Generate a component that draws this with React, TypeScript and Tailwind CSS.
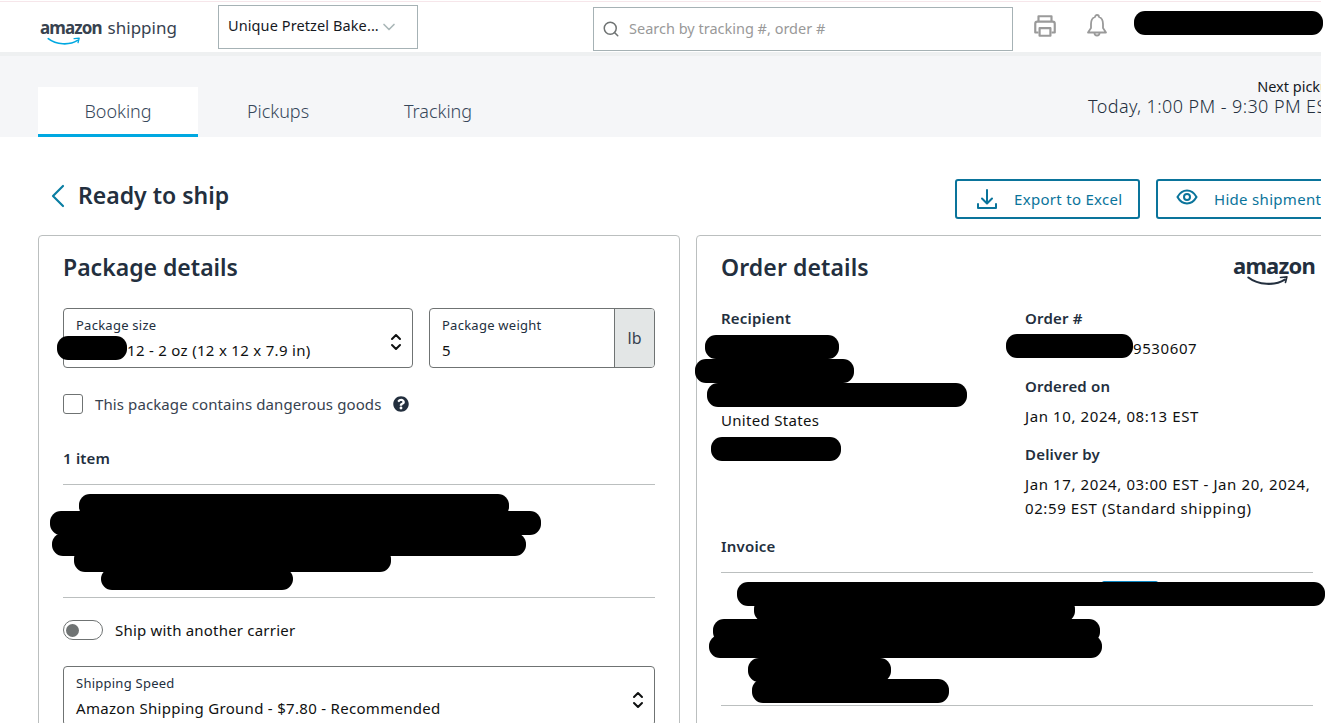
import { ChevronDown, ChevronLeft, Search } from "lucide-react";
import { FaQuestionCircle } from "react-icons/fa";

const Blot = ({ className }: { className: string }) => (
  <div className={`absolute bg-black rounded-[11px] ${className}`} />
);

const Swoosh = ({ className, color }: { className: string; color: string }) => (
  <svg viewBox="0 0 60 16" className={className} fill="none" stroke={color}>
    <path d="M2 3c14 11 38 12 52 3" strokeWidth="3" strokeLinecap="round" />
    <path d="M48 3l9-1-2 8" strokeWidth="2.4" strokeLinecap="round" strokeLinejoin="round" />
  </svg>
);

const Stepper = () => (
  <svg viewBox="0 0 12 20" className="h-[20px] w-[12px] shrink-0 self-center" fill="none" stroke="#0f1111" strokeWidth="2" strokeLinecap="round" strokeLinejoin="round">
    <path d="M2 7l4-4 4 4" />
    <path d="M2 13l4 4 4-4" />
  </svg>
);

function Label({ children }: { children: string }) {
  return <div className="h-[20px] text-[15px] font-semibold leading-[20px] tracking-[0.2px] text-[#232f3e]">{children}</div>;
}

function Value({ children }: { children: string }) {
  return <div className="text-[15px] leading-[24px] tracking-[0.6px] text-[#0f1111]">{children}</div>;
}

function Field({ label, value, className, valueClass }: { label: string; value: string; className: string; valueClass: string }) {
  return (
    <div className={`flex h-[60px] rounded-[4px] border border-[#6f7373] pl-[12px] pr-[10px] pt-[7px] ${className}`}>
      <div className="flex-1">
        <div className="text-[13px] leading-[18px] tracking-[0.25px] text-[#232f3e]">{label}</div>
        <div className={`mt-[5px] text-[15px] leading-[22px] tracking-[0.3px] text-[#0f1111] ${valueClass}`}>{value}</div>
      </div>
      <Stepper />
    </div>
  );
}

export default function App() {
  return (
    <div
      className="relative h-[723px] w-[1326px] overflow-hidden bg-white"
      style={{ fontFamily: '"Noto Sans", "Open Sans", sans-serif' }}
    >
      <div className="h-[723px] w-[1321px] overflow-hidden">
        <div className="h-[2px] border-b border-[#f6e6ea]" />

        {/* HEADER */}
        <header className="flex h-[54px] items-start border-b-4 border-[#eef0f1] bg-white pl-[40px]">
          <div className="w-[178px] shrink-0 pt-[13px]">
            <div className="relative flex items-baseline gap-[6px] leading-[26px] text-[#37424f]">
              <span className="text-[17px] font-bold tracking-[-0.9px]">amazon</span>
              <span className="text-[17px]">shipping</span>
              <Swoosh className="absolute left-[7px] top-[22px] h-[9px] w-[34px]" color="#00a8e1" />
            </div>
          </div>
          <div className="mt-[3px] flex h-[44px] w-[200px] shrink-0 items-center justify-between border border-[#a6b2b5] pl-[9px] pr-[18px]">
            <span className="whitespace-nowrap pb-[3px] text-[14.500px] tracking-[0.1px] text-[#16191f]">Unique Pretzel Bake...</span>
            <ChevronDown size={20} className="shrink-0 text-[#aab7b8]" />
          </div>
          <div className="ml-[175px] mt-[5px] flex h-[44px] w-[420px] shrink-0 items-center gap-[9px] border border-[#a6b2b5] pl-[8px]">
            <Search size={18} className="text-[#6f7373]" />
            <span className="text-[14.500px] text-[#999]">Search by tracking #, order #</span>
          </div>
          <svg viewBox="0 0 24 24" className="ml-[19px] mt-[11px] h-[26px] w-[26px] shrink-0" fill="none" stroke="#9a9a9a" strokeWidth="2" strokeLinejoin="round">
            <path d="M6 8V3h12v5" />
            <path d="M6 18H3V10a2 2 0 0 1 2-2h14a2 2 0 0 1 2 2v8h-3" />
            <path d="M7 14h10v7H7z" />
          </svg>
          <svg viewBox="0 0 24 26" className="ml-[27px] mt-[11px] h-[26px] w-[24px] shrink-0" fill="none" stroke="#9a9a9a" strokeWidth="1.8" strokeLinejoin="round">
            <path d="M12 2a2 2 0 0 1 2 2c3 1 4 3.500 4 7v4l3 4.500H3L6 15v-4c0-3.500 1-6 4-7a2 2 0 0 1 2-2z" />
            <path d="M9.500 20a2.500 2.500 0 0 0 5 0" />
          </svg>
        </header>

        {/* TABS */}
        <div className="flex h-[81px] items-start bg-[#f5f6f8] pl-[38px] pt-[31px]">
          <div className="flex h-[50px] w-[160px] shrink-0 items-center justify-center border-b-[3px] border-[#00a8e1] bg-white pt-[2px] text-[18px] font-light text-[#37475a]">
            Booking
          </div>
          <div className="flex h-[50px] w-[160px] shrink-0 items-center justify-center pb-[1px] text-[18px] font-light text-[#37475a]">
            Pickups
          </div>
          <div className="flex h-[50px] w-[160px] shrink-0 items-center justify-center pb-[1px] text-[18px] font-light text-[#37475a]">
            Tracking
          </div>
          <div className="ml-[570px] mt-[-10px] w-[248px] shrink-0 text-right">
            <div className="mr-[-2px] text-[14.500px] leading-[19px] text-[#16191f]">Next pickup</div>
            <div className="whitespace-nowrap text-[18px] font-light leading-[20px] tracking-[0.4px] text-[#232f3e]">
              Today, 1:00 PM - 9:30 PM EST
            </div>
          </div>
        </div>

        {/* TITLE ROW */}
        <div className="mt-[42px] flex h-[40px] items-center pl-[38px]">
          <ChevronLeft size={40} strokeWidth={1.3} className="mb-[6px] shrink-0 text-[#0a7ea3]" />
          <h1 className="mb-[8px] w-[152px] shrink-0 whitespace-nowrap text-[23px] font-semibold text-[#232f3e]">Ready to ship</h1>
          <button className="ml-[725px] flex h-[40px] w-[185px] shrink-0 items-center rounded-[3px] border-2 border-[#0a749b] pl-[19px] text-[15px] tracking-[0.3px] text-[#0a749b]">
            <svg viewBox="0 0 22 22" className="h-[22px] w-[22px]" fill="none" stroke="#0a749b" strokeWidth="2" strokeLinecap="round" strokeLinejoin="round">
              <path d="M11 2v13M6 10.500l5 5 5-5" />
              <path d="M2 16v4h18v-4" />
            </svg>
            <span className="ml-[16px]">Export to Excel</span>
          </button>
          <button className="ml-[16px] flex h-[40px] w-[200px] shrink-0 items-center rounded-[3px] border-2 border-[#0a749b] pl-[18px] text-[15px] tracking-[0.3px] text-[#0a749b]">
            <svg viewBox="0 0 22 22" className="mb-[4px] h-[22px] w-[22px]" fill="none" stroke="#0a749b" strokeWidth="2">
              <path d="M1.500 11C4 6.500 7.500 4.500 11 4.500s7 2 9.500 6.500c-2.500 4.500-6 6.500-9.500 6.500S4 15.500 1.500 11z" />
              <circle cx="11" cy="11" r="3" />
            </svg>
            <span className="ml-[16px] whitespace-nowrap">Hide shipment</span>
          </button>
        </div>

        {/* CARDS */}
        <div className="mt-[16px] flex gap-[16px] pl-[38px]">
          <section className="h-[600px] w-[642px] shrink-0 rounded-[4px] border border-[#bbbfbf] px-[24px] pt-[14px]">
            <h2 className="h-[34px] text-[23px] font-semibold leading-[34px] text-[#232f3e]">Package details</h2>
            <div className="mt-[24px] flex gap-[16px]">
              <Field label="Package size" value="12 - 2 oz (12 x 12 x 7.9 in)" className="w-[350px]" valueClass="pl-[51px]" />
              <div className="flex h-[60px] w-[226px] overflow-hidden rounded-[4px] border border-[#6f7373]">
                <div className="flex-1 pl-[12px] pt-[7px]">
                  <div className="text-[13px] leading-[18px] tracking-[0.25px] text-[#232f3e]">Package weight</div>
                  <div className="mt-[5px] text-[15px] leading-[22px] text-[#0f1111]">5</div>
                </div>
                <div className="flex w-[40px] items-center justify-center border-l border-[#6f7373] bg-[#e3e6e6] text-[16px] text-[#37424f]">
                  lb
                </div>
              </div>
            </div>
            <div className="mt-[26px] flex h-[20px] items-center">
              <div className="h-[20px] w-[20px] shrink-0 rounded-[3px] border border-[#6f7373]" />
              <span className="ml-[12px] text-[15px] tracking-[0.1px] text-[#37424f]">This package contains dangerous goods</span>
              <FaQuestionCircle size={16} className="ml-[12px] text-[#232f3e]" />
            </div>
            <div className="mt-[34px]">
              <Label>1 item</Label>
            </div>
            <div className="mt-[16px] h-[114px] border-y border-[#bbbfbf]" />
            <div className="mt-[22px] flex h-[20px] items-center">
              <div className="flex h-[20px] w-[40px] shrink-0 items-center rounded-full border border-[#6f7373] pl-[2px]">
                <div className="h-[13px] w-[13px] rounded-full bg-[#6f7373]" />
              </div>
              <span className="ml-[12px] text-[15px] tracking-[0.2px] text-[#0f1111]">Ship with another carrier</span>
            </div>
            <div className="mt-[26px]">
              <Field label="Shipping Speed" value="Amazon Shipping Ground - $7.80 - Recommended" className="w-[592px]" valueClass="" />
            </div>
          </section>

          <section className="h-[600px] w-[640px] shrink-0 rounded-[4px] border border-[#bbbfbf] pl-[24px] pr-[22px] pt-[14px]">
            <div className="flex h-[34px] justify-between">
              <h2 className="text-[23px] font-semibold leading-[34px] tracking-[0.1px] text-[#232f3e]">Order details</h2>
              <div className="relative mt-[1px] w-[80px] whitespace-nowrap text-center text-[22px] font-bold leading-[28px] tracking-[-0.8px] text-[#232f3e]">
                amazon
                <Swoosh className="absolute left-[14px] top-[24px] h-[12px] w-[42px]" color="#232f3e" />
              </div>
            </div>
            <div className="mt-[24px] flex">
              <div className="w-[304px] shrink-0">
                <Label>Recipient</Label>
                <div className="mt-[80px] text-[15px] leading-[24px] tracking-[0.3px] text-[#0f1111]">United States</div>
              </div>
              <div className="w-[290px] shrink-0">
                <Label>Order #</Label>
                <div className="mt-[8px] pl-[108px]">
                  <Value>9530607</Value>
                </div>
                <div className="mt-[16px]">
                  <Label>Ordered on</Label>
                </div>
                <div className="mt-[8px]">
                  <Value>Jan 10, 2024, 08:13 EST</Value>
                </div>
                <div className="mt-[16px]">
                  <Label>Deliver by</Label>
                </div>
                <div className="mt-[8px]">
                  <Value>Jan 17, 2024, 03:00 EST - Jan 20, 2024, 02:59 EST (Standard shipping)</Value>
                </div>
              </div>
            </div>
            <div className="mt-[16px]">
              <Label>Invoice</Label>
            </div>
            <div className="mt-[16px] h-[134px] border-y border-[#bbbfbf]" />
          </section>
        </div>
      </div>

      {/* REDACTIONS */}
      <div className="absolute left-[1102px] top-[581px] h-[2px] w-[56px] rounded-t-[2px] bg-[#0a84c0]" />
      <Blot className="left-[1134px] top-[11px] h-[24px] w-[189px]" />
      <Blot className="left-[57px] top-[336px] h-[24px] w-[70px]" />
      <Blot className="left-[79px] top-[494px] h-[24px] w-[430px]" />
      <Blot className="left-[50px] top-[511px] h-[24px] w-[491px]" />
      <Blot className="left-[52px] top-[533px] h-[23px] w-[474px]" />
      <Blot className="left-[74px] top-[548px] h-[24px] w-[317px]" />
      <Blot className="left-[101px] top-[568px] h-[22px] w-[192px]" />
      <Blot className="left-[705px] top-[335px] h-[24px] w-[134px]" />
      <Blot className="left-[695px] top-[359px] h-[24px] w-[159px]" />
      <Blot className="left-[707px] top-[383px] h-[24px] w-[260px]" />
      <Blot className="left-[711px] top-[437px] h-[24px] w-[130px]" />
      <Blot className="left-[1006px] top-[334px] h-[24px] w-[127px]" />
      <Blot className="left-[737px] top-[582px] h-[24px] w-[588px]" />
      <Blot className="left-[754px] top-[598px] h-[24px] w-[321px]" />
      <Blot className="left-[713px] top-[619px] h-[24px] w-[387px]" />
      <Blot className="left-[709px] top-[635px] h-[23px] w-[393px]" />
      <Blot className="left-[748px] top-[658px] h-[24px] w-[143px]" />
      <Blot className="left-[752px] top-[679px] h-[24px] w-[197px]" />
    </div>
  );
}
